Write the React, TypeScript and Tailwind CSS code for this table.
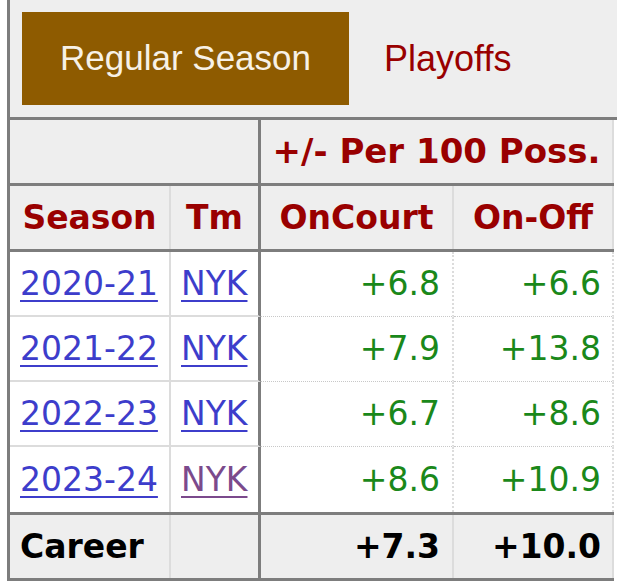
import React from 'react';

const seasons = [
  { season: '2020-21', tm: 'NYK', onCourt: '+6.8', onOff: '+6.6', visited: false },
  { season: '2021-22', tm: 'NYK', onCourt: '+7.9', onOff: '+13.8', visited: false },
  { season: '2022-23', tm: 'NYK', onCourt: '+6.7', onOff: '+8.6', visited: false },
  { season: '2023-24', tm: 'NYK', onCourt: '+8.6', onOff: '+10.9', visited: true },
];

const font = "font-['DejaVu_Sans','Verdana',sans-serif]";

export default function App() {
  return (
    <div className={`min-h-screen bg-white ${font} text-[33px]`}>
      {/* Season / Playoffs switcher */}
      <div className="ml-[7px] h-[120px] border-l-[3px] border-b-[3px] border-[#7d7d7d] bg-[#eeeeee] pl-[12px] pt-[12px] flex items-start">
        <div className="w-[327px] h-[93px] bg-[#8e5b00] flex items-center justify-center font-['Liberation_Sans','Arial',sans-serif] text-[35px] text-[#f7f1e6]">
          Regular Season
        </div>
        <div className="h-[93px] pl-[35px] flex items-center font-['Liberation_Sans','Arial',sans-serif] text-[36px] text-[#990000]">
          Playoffs
        </div>
      </div>

      <div className="ml-[7px] w-[607px] border-l-[3px] border-b-[3px] border-[#7d7d7d]">
        {/* Group header */}
        <div className="flex h-[66px] bg-[#eeeeee] border-b-[3px] border-[#7d7d7d] font-bold text-[#990000]">
          <div className="w-[251px] border-r-[3px] border-[#7d7d7d]" />
          <div className="w-[353px] border-r-2 border-[#dcdcdc] flex items-center justify-center text-[34px]">
            +/- Per 100 Poss.
          </div>
        </div>

        {/* Column header */}
        <div className="flex h-[66px] bg-[#eeeeee] border-b-[3px] border-[#7d7d7d] font-bold text-[#990000]">
          <div className="w-[161px] border-r-2 border-[#dcdcdc] flex items-center justify-center">Season</div>
          <div className="w-[90px] border-r-[3px] border-[#7d7d7d] flex items-center justify-center">Tm</div>
          <div className="w-[193px] border-r-2 border-[#dcdcdc] flex items-center justify-center">OnCourt</div>
          <div className="w-[160px] border-r-2 border-[#dcdcdc] flex items-center justify-center">On-Off</div>
        </div>

        {/* Seasons */}
        {seasons.map((row, i) => {
          const last = i === seasons.length - 1;
          return (
            <div key={row.season} className="flex h-[65px] bg-white">
              <div className={`w-[161px] border-r-2 border-[#dcdcdc] pl-[10px] flex items-center ${last ? '' : 'border-b-2'}`}>
                <a href="#" className="text-[#3d3dcb] underline decoration-2 underline-offset-[5px]">{row.season}</a>
              </div>
              <div className={`w-[90px] border-r-[3px] border-r-[#7d7d7d] border-b-[#dcdcdc] pl-[10px] flex items-center ${last ? '' : 'border-b-2'}`}>
                <a
                  href="#"
                  className={`underline decoration-2 underline-offset-[5px] ${row.visited ? 'text-[#7b4a8c]' : 'text-[#3d3dcb]'}`}
                >
                  {row.tm}
                </a>
              </div>
              <div className={`w-[193px] border-r-2 border-r-[#dcdcdc] border-b-[#c8c8c8] border-dotted pr-[12px] flex items-center justify-end text-[#1a881a] ${last ? '' : 'border-b'}`}>
                {row.onCourt}
              </div>
              <div className={`w-[160px] border-r-2 border-r-[#dcdcdc] border-b-[#c8c8c8] border-dotted pr-[11px] flex items-center justify-end text-[#1a881a] ${last ? '' : 'border-b'}`}>
                {row.onOff}
              </div>
            </div>
          );
        })}

        {/* Career totals */}
        <div className="flex h-[66px] bg-[#eeeeee] border-t-[3px] border-[#7d7d7d] font-bold text-black">
          <div className="w-[161px] border-r-2 border-[#dcdcdc] pl-[10px] flex items-center">Career</div>
          <div className="w-[90px] border-r-[3px] border-[#7d7d7d]" />
          <div className="w-[193px] border-r-2 border-[#dcdcdc] pr-[12px] flex items-center justify-end">+7.3</div>
          <div className="w-[160px] border-r-2 border-[#dcdcdc] pr-[11px] flex items-center justify-end">+10.0</div>
        </div>
      </div>
    </div>
  );
}
